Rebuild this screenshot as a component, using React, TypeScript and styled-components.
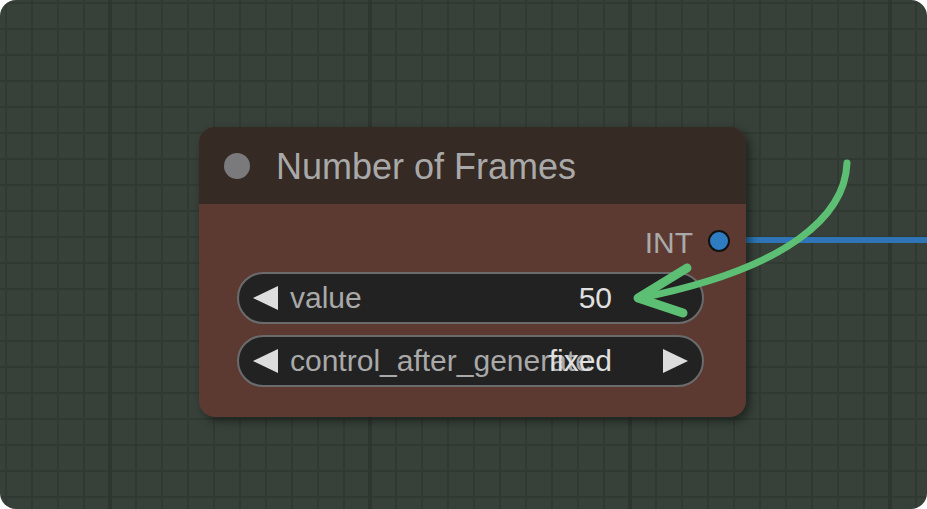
import React from "react";
import styled, { createGlobalStyle } from "styled-components";

const Global = createGlobalStyle`
  html, body { margin: 0; padding: 0; background: #ffffff; }
  body { font-family: "Liberation Sans", Arial, sans-serif; }
`;

const Canvas = styled.div`
  position: relative;
  width: 927px;
  height: 509px;
  border-radius: 16px;
  overflow: hidden;
  background-color: #374139;
  background-image:
    linear-gradient(90deg, #2e362f 4px, transparent 4px),
    linear-gradient(90deg, #313a32 2px, transparent 2px),
    linear-gradient(180deg, #313a32 2px, transparent 2px);
  background-size: 260px 100%, 26px 26px, 26px 26px;
  background-position: 108px 0, 5px 0, 0 2px;
`;

const Layer = styled.svg<{ $z: number }>`
  position: absolute;
  left: 0;
  top: 0;
  width: 927px;
  height: 509px;
  z-index: ${(p) => p.$z};
  pointer-events: none;
`;

const Node = styled.div`
  position: absolute;
  left: 199px;
  top: 127px;
  width: 547px;
  height: 290px;
  z-index: 2;
  border-radius: 16px;
  overflow: hidden;
  background: #5c3a32;
  box-shadow: 4px 4px 10px rgba(0, 0, 0, 0.45);
  display: flex;
  flex-direction: column;
`;

const Title = styled.div`
  height: 77px;
  flex: none;
  background: #352a24;
  display: flex;
  align-items: center;
  padding-left: 25px;
  gap: 26px;
`;

const TitleDot = styled.div`
  width: 26px;
  height: 26px;
  border-radius: 50%;
  background: #7a7a7c;
`;

const TitleText = styled.div`
  font-size: 36px;
  color: #a9a9a9;
  line-height: 1;
  margin-top: 2px;
`;

const Body = styled.div`
  flex: 1;
  display: flex;
  flex-direction: column;
`;

const OutputRow = styled.div`
  display: flex;
  justify-content: flex-end;
  align-items: center;
  gap: 15px;
  height: 30px;
  padding: 22px 16px 0 0;
`;

const OutputLabel = styled.span`
  font-size: 30px;
  line-height: 30px;
  color: #a9a9a9;
  margin-top: 3px;
`;

const OutputDot = styled.div`
  width: 18px;
  height: 18px;
  border-radius: 50%;
  background: #2f7dc0;
  border: 2px solid #111111;
`;

const WidgetList = styled.div`
  display: flex;
  flex-direction: column;
  gap: 11px;
  padding: 16px 42px 0 38px;
`;

const Widget = styled.div`
  box-sizing: border-box;
  height: 52px;
  border-radius: 26px;
  border: 2px solid #6b6b6b;
  background: #222222;
  display: flex;
  align-items: center;
  padding: 0 14px;
  font-size: 30px;
`;

const Arrow = styled.div<{ $dir: "left" | "right"; $hidden?: boolean }>`
  flex: none;
  width: 0;
  height: 0;
  border-top: 12px solid transparent;
  border-bottom: 12px solid transparent;
  ${(p) =>
    p.$dir === "left"
      ? "border-right: 25px solid #dddddd;"
      : "border-left: 25px solid #dddddd;"}
  visibility: ${(p) => (p.$hidden ? "hidden" : "visible")};
`;

const Label = styled.span`
  flex: 1;
  min-width: 0;
  white-space: nowrap;
  overflow: visible;
  color: #a9a9a9;
  margin-left: 12px;
`;

const Value = styled.span`
  flex: none;
  color: #e0e0e0;
  margin-right: 51px;
`;

export default function App() {
  return (
    <>
      <Global />
      <Canvas>
        <Layer $z={1} viewBox="0 0 927 509">
          <line x1="719" y1="240" x2="927" y2="240" stroke="#2e74b6" strokeWidth="6" />
        </Layer>
        <Node>
          <Title>
            <TitleDot />
            <TitleText>Number of Frames</TitleText>
          </Title>
          <Body>
            <OutputRow>
              <OutputLabel>INT</OutputLabel>
              <OutputDot />
            </OutputRow>
            <WidgetList>
              <Widget>
                <Arrow $dir="left" />
                <Label>value</Label>
                <Value>50</Value>
                <Arrow $dir="right" $hidden />
              </Widget>
              <Widget>
                <Arrow $dir="left" />
                <Label>control_after_generate</Label>
                <Value>fixed</Value>
                <Arrow $dir="right" />
              </Widget>
            </WidgetList>
          </Body>
        </Node>
        <Layer $z={3} viewBox="0 0 927 509">
          <g fill="none" stroke="#5cbf73" strokeLinecap="round" strokeLinejoin="round">
            <path d="M847 163 C 845 215, 790 268, 640 298" strokeWidth="7" />
            <path d="M687 268 L 638 298 L 683 313" strokeWidth="9" />
          </g>
        </Layer>
      </Canvas>
    </>
  );
}
